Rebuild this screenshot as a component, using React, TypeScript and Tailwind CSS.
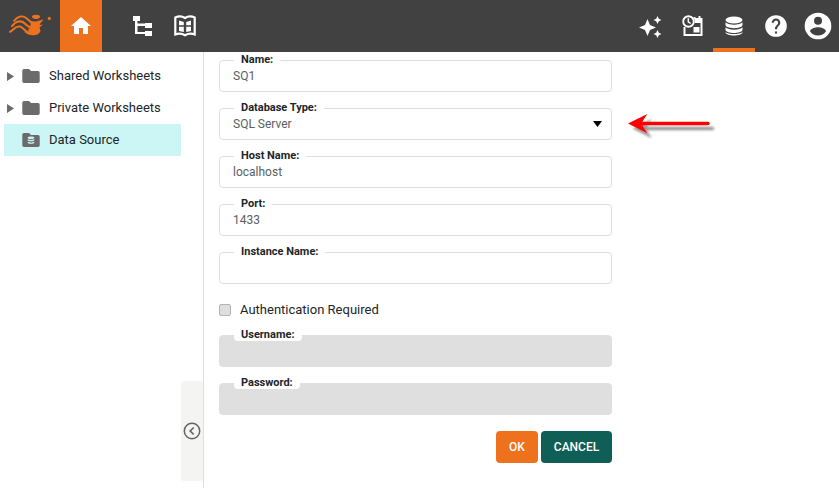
import React from "react";

const FONT = "font-[Roboto,'Liberation_Sans',sans-serif]";

function Logo() {
  return (
    <svg className="h-[52px] w-[60px] shrink-0" viewBox="0 0 60 52" fill="none">
      <g stroke="#ee721d" strokeLinecap="round" strokeLinejoin="round">
        <path d="M14 20.8C18 15.8 23 15.2 26.5 18.2S30 22.5 34 23" strokeWidth="1.9" />
        <path d="M12 26.2C16 20.8 21 20 25 23.6S28.5 27.8 33 28.5" strokeWidth="2.1" />
        <path d="M10 31.8C14 29.6 15.5 25.6 20 26.6S25 33.2 31 33.5" strokeWidth="2" />
      </g>
      <path d="M27 19C31 22.8 36 22 43.5 19.2C42 22.3 39.6 23 39.8 25L43 24.5L39.5 27.5L40.5 31C39 35.8 30 37.2 24.5 32C28 33 30 31.5 27.5 28.5C30 29.4 32 28 29.5 25.5C31.5 25.5 31.5 23.5 27 19Z" fill="#ee721d" />
      <ellipse cx="36" cy="16.8" rx="4" ry="2.1" fill="#ee721d" />
      <circle cx="49.3" cy="18.4" r="1.6" fill="#ee721d" />
    </svg>
  );
}

function Header() {
  return (
    <header className="flex h-[52px] shrink-0 items-center bg-[#414141] text-white">
      <Logo />
      <div className="flex h-full w-[42px] items-center justify-center bg-[#ee721d]">
        <svg className="mt-[-1px] h-6 w-6" viewBox="0 0 24 24" fill="currentColor">
          <path d="M10 20v-6h4v6h5v-8h3L12 3 2 12h3v8z" />
        </svg>
      </div>
      <svg className="ml-[31px] h-5 w-[19px]" viewBox="0 0 19 20" fill="currentColor">
        <path d="M0 0h7v5H4.5v2.5H12V7h7v5h-7v-2H4.5v6H12v-1h7v5h-7v-2H2V5H0z" />
      </svg>
      <svg className="ml-[21.5px] h-[22px] w-[22px]" viewBox="0 0 22 22" fill="none" stroke="currentColor">
        <path d="M1.3 2.5C4.5 1 8 1 11 3c3-2 6.500-2 9.700-.5v17c-3.200-1.200-6.700-1-9.700.8-3-1.800-6.500-2-9.700-.8z" strokeWidth="2.200" />
        <path d="M5 5.500 9.800 7v3.200H5zM12.200 7 17 5.500v4.700h-4.800zM5 11.800h4.800v5.200L5 16zM12.200 11.800H17V16l-4.800 1z" fill="currentColor" stroke="none" />
      </svg>
      <div className="ml-auto flex h-full items-center">
        <svg className="h-[23px] w-6" viewBox="0 0 24 23" fill="currentColor">
          <path d="M8.500 4 11 10 17 12.500 11 15 8.500 21 6 15 0 12.500 6 10zM18.500 1l1.300 2.700L22.500 5l-2.700 1.300L18.500 9l-1.300-2.700L14.500 5l2.700-1.300zM18.500 15l1.300 2.700 2.700 1.300-2.700 1.300-1.300 2.700-1.300-2.700-2.700-1.300 2.700-1.300z" />
        </svg>
        <svg className="ml-[19px] h-[22px] w-[22px]" viewBox="0 0 22 22" fill="none" stroke="currentColor">
          <path d="M2.500 12v8h17V4H13" strokeWidth="2" />
          <path d="M11 4h9v4h-9z" fill="currentColor" stroke="none" />
          <path d="M12.500 2v3M17.500 1v4" strokeWidth="2" />
          <circle cx="6.500" cy="6.500" r="6.300" fill="#414141" stroke="none" />
          <circle cx="6.500" cy="6.500" r="5.300" strokeWidth="1.900" />
          <path d="M6.300 3.300v3.500l2.300 1.700" strokeWidth="1.500" />
          <path d="M11.500 12h6v5.500h-6z" fill="currentColor" stroke="none" />
        </svg>
        <div className="ml-[9px] flex h-full w-[42px] items-center justify-center border-b-4 border-[#ee721d] pt-[3px]">
          <svg className="h-5 w-[18px]" viewBox="0 0 18 20" fill="currentColor">
            <ellipse cx="9" cy="4" rx="8.500" ry="3.500" />
            <path d="M.5 6.300c2.500 3.300 14.500 3.300 17 0V9c-.8 4.200-16.200 4.200-17 0zM.5 11.300c2.500 3.300 14.500 3.300 17 0V14c-.8 4-16.200 4-17 0z" />
            <path d="M.5 15.900c2.500 2.700 14.500 2.700 17 0v.7c-.8 4-16.200 4-17 0z" />
          </svg>
        </div>
        <svg className="ml-[8px] h-[26px] w-[26px]" viewBox="0 0 24 24" fill="currentColor">
          <path d="M12 2a10 10 0 100 20 10 10 0 000-20zm1 17h-2v-2h2zm2.070-7.750-.9.920C13.450 12.900 13 13.500 13 15h-2v-.5c0-1.100.45-2.100 1.170-2.830l1.240-1.260A2 2 0 1010 9H8a4 4 0 118 0c0 .88-.36 1.680-.93 2.250z" />
        </svg>
        <svg className="mr-[5px] ml-[13px] h-[32px] w-[32px]" viewBox="0 0 24 24" fill="currentColor">
          <path d="M12 2a10 10 0 100 20 10 10 0 000-20zm0 3a3 3 0 110 6 3 3 0 010-6zm0 14.200A7.200 7.200 0 016 15.980c.03-1.990 4-3.080 6-3.080s5.970 1.090 6 3.080a7.200 7.200 0 01-6 3.220z" />
        </svg>
      </div>
    </header>
  );
}

function TreeItem({ label, source }: { label: string; source?: boolean }) {
  return (
    <div className={`flex h-8 w-[177px] items-center text-[13px] ${source ? "bg-[#cbf6f5]" : ""}`}>
      <svg className="ml-[3px] h-[9px] w-[7px]" viewBox="0 0 7 9">
        {!source && <path d="M0 0 7 4.500 0 9z" fill="#6b6b6b" />}
      </svg>
      <svg className="ml-[8px] h-[14px] w-[18px]" viewBox="0 0 18 14">
        <path d="M2 0h5l2 2h7q1.700 0 1.700 1.700v8.600q0 1.700-1.700 1.700H2Q.3 14 .3 12.300V1.700Q.3 0 2 0z" fill="#6b6b6b" />
        {source && (
          <g fill="#cbf6f5">
            <ellipse cx="9" cy="4.800" rx="3.300" ry="1.200" />
            <path d="M5.700 6.200q3.300 1.500 6.600 0v1.200q-3.300 1.700-6.600 0zM5.700 8.800q3.300 1.500 6.600 0V10q-3.300 1.700-6.600 0z" />
          </g>
        )}
      </svg>
      <span className="ml-[9px] whitespace-nowrap">{label}</span>
    </div>
  );
}

function Sidebar() {
  return (
    <aside className="flex w-[204px] shrink-0 flex-col justify-between border-r border-[#dedede]">
      <nav className="flex flex-col pt-2 pl-1">
        <TreeItem label="Shared Worksheets" />
        <TreeItem label="Private Worksheets" />
        <TreeItem label="Data Source" source />
      </nav>
      <button className="mb-[7px] flex h-[100px] w-[22px] items-center justify-center self-end rounded-[3px] bg-[#f4f4f2]">
        <svg className="h-[18px] w-[18px]" viewBox="0 0 18 18" fill="none" stroke="#656565">
          <circle cx="9" cy="9" r="7.700" strokeWidth="1.500" />
          <path d="M10.700 5.500 7.200 9l3.500 3.500" strokeWidth="1.700" />
        </svg>
      </button>
    </aside>
  );
}

function Field({ label, value, select, disabled }: { label: string; value?: string; select?: boolean; disabled?: boolean }) {
  return (
    <div className={`relative flex h-8 shrink-0 items-center justify-between rounded-[4px] border px-[13px] text-[12px] text-[#5b6063] ${disabled ? "border-[#dfdfdf] bg-[#dfdfdf]" : "border-[#dedede] bg-white"}`}>
      <label className="absolute -top-[8px] left-[14px] h-[13px] rounded-[4px] bg-white px-[7px] text-[11px] leading-[13px] font-bold whitespace-nowrap text-[#212529]">{label}</label>
      <span>{value}</span>
      {select && (
        <svg className="-mr-[4px] h-[6px] w-[9px]" viewBox="0 0 9 6"><path d="M0 0h9L4.500 6z" fill="#000" /></svg>
      )}
    </div>
  );
}

function Arrow() {
  return (
    <svg className="mt-[57px] ml-[14px] h-[30px] w-[94px] shrink-0" viewBox="0 0 94 30">
      <defs>
        <filter id="shadow" x="-10%" y="-30%" width="120%" height="180%">
          <feDropShadow dx="4.500" dy="5" stdDeviation="1.200" floodColor="#000" floodOpacity=".4" />
        </filter>
      </defs>
      <g filter="url(#shadow)" fill="#f00">
        <path d="M2 14.500 21.300 5 16.300 12.800H82a1.700 1.700 0 010 3.400H16.300L21.300 24.200z" />
      </g>
    </svg>
  );
}

export default function App() {
  return (
    <div className={`flex h-[488px] w-[839px] flex-col overflow-hidden bg-white text-[#212529] ${FONT}`}>
      <Header />
      <div className="flex min-h-0 flex-1">
        <Sidebar />
        <main className="ml-[15px] flex w-[393px] shrink-0 flex-col pt-2">
          <div className="flex flex-col gap-4">
            <Field label="Name:" value="SQ1" />
            <Field label="Database Type:" value="SQL Server" select />
            <Field label="Host Name:" value="localhost" />
            <Field label="Port:" value="1433" />
            <Field label="Instance Name:" />
          </div>
          <div className="mt-4 flex h-5 items-center text-[13px]">
            <span className="mr-[9px] h-3 w-3 rounded-[2px] border border-[#b3b3b3] bg-[#dedede]" />
            Authentication Required
          </div>
          <div className="mt-[15px] flex flex-col gap-4">
            <Field label="Username:" disabled />
            <Field label="Password:" disabled />
          </div>
          <div className="mt-4 flex justify-end gap-[3px] text-[12px] font-medium text-white">
            <button className="h-8 w-[42px] rounded-[4px] bg-[#ee721d]">OK</button>
            <button className="h-8 w-[71px] rounded-[4px] bg-[#105f57]">CANCEL</button>
          </div>
        </main>
        <Arrow />
      </div>
    </div>
  );
}
